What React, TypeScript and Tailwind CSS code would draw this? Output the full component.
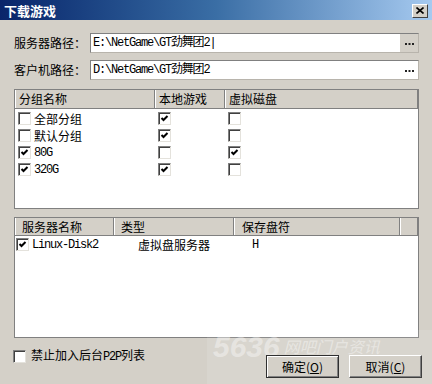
import React from 'react';

const cjk = "font-['Noto_Sans_CJK_SC',sans-serif]";
const mono = "font-['Liberation_Mono','Noto_Sans_CJK_SC',monospace] text-[12px] tracking-[-1.2px]";

function Check({ on }: { on?: boolean }) {
  return (
    <span className="flex h-[13px] w-[13px] shrink-0 items-center justify-center border border-t-[#808080] border-l-[#808080] border-b-[#e4e2dc] border-r-[#e4e2dc] bg-white shadow-[inset_1px_1px_0_#404040]">
      {on && (
        <svg width="9" height="9" viewBox="0 0 9 9">
          <path d="M1.5 4 L3.5 6 L7.5 2" stroke="#000" strokeWidth="2" fill="none" />
        </svg>
      )}
    </span>
  );
}

function HeadCell({ w, children }: { w?: string; children?: React.ReactNode }) {
  return (
    <div className={`flex h-full items-center border-l border-l-white border-r border-r-[#808080] pl-[3px] text-[12px] text-black ${w ?? 'flex-1'}`}>
      {children}
    </div>
  );
}

function PathRow({ label, value, grayBtn }: { label: string; value: string; grayBtn?: boolean }) {
  return (
    <div className="flex items-center">
      <span className="w-[76px] text-[12px] text-black">{label}</span>
      <div className="flex h-[20px] flex-1 items-center border border-t-[#808080] border-l-[#808080] border-b-[#b8b4ac] border-r-[#b8b4ac] bg-white">
        <span className={`flex-1 pl-[2px] text-black ${mono}`}>{value}</span>
        <span className={`flex h-full w-[18px] items-center justify-center ${grayBtn ? 'bg-[#d4d0c8]' : 'bg-white'}`}>
          <svg width="9" height="3" viewBox="0 0 9 3">
            <rect x="0" y="1" width="2" height="2" fill="#222" />
            <rect x="3.5" y="1" width="2" height="2" fill="#222" />
            <rect x="7" y="1" width="2" height="2" fill="#222" />
          </svg>
        </span>
      </div>
    </div>
  );
}

const groups = [
  { name: '全部分组', latin: false, local: true, disk: false, on: false },
  { name: '默认分组', latin: false, local: true, disk: false, on: false },
  { name: '80G', latin: true, local: false, disk: true, on: true },
  { name: '320G', latin: true, local: true, disk: false, on: true },
];

function Button({ children, primary }: { children: React.ReactNode; primary?: boolean }) {
  return (
    <div
      className={`relative z-10 flex h-[23px] w-[73px] items-center justify-center bg-[#d4d0c8] text-[12px] text-black ${
        primary
          ? 'border border-[#303030] shadow-[inset_1px_1px_0_#fff,inset_-1px_-1px_0_#808080]'
          : 'border border-t-white border-l-white border-b-[#404040] border-r-[#404040] shadow-[inset_-1px_-1px_0_#808080]'
      }`}
    >
      {children}
    </div>
  );
}

export default function App() {
  return (
    <div className={`relative h-[384px] w-[432px] overflow-hidden bg-[#d4d0c8] ${cjk}`}>
      {/* Title bar */}
      <div className="flex h-[20px] items-center bg-gradient-to-r from-[#0a246a] via-[#3a6ea5] to-[#a6caf0] pl-[4px] pr-[4px]">
        <span className="text-[13px] font-bold leading-none text-white">下载游戏</span>
        <div className="ml-auto mt-[1px] flex h-[14px] w-[16px] items-center justify-center border border-t-white border-l-white border-b-[#404040] border-r-[#404040] bg-[#d4d0c8]">
          <svg width="8" height="7" viewBox="0 0 8 7">
            <path d="M0.5 0.5 L7.5 6.5 M7.5 0.5 L0.5 6.5" stroke="#000" strokeWidth="1.6" />
          </svg>
        </div>
      </div>

      <div className="flex flex-col pl-[14px] pr-[13px]">
        <div className="mt-[13px]">
          <PathRow label="服务器路径：" value="E:\NetGame\GT劲舞团2|" grayBtn />
        </div>
        <div className="mt-[7px]">
          <PathRow label="客户机路径：" value="D:\NetGame\GT劲舞团2" />
        </div>

        {/* Group table */}
        <div className="mt-[9px] flex h-[120px] flex-col border border-[#808080] bg-white">
          <div className="flex h-[19px] border-b border-b-[#808080] bg-[#d4d0c8]">
            <HeadCell w="w-[140px]">分组名称</HeadCell>
            <HeadCell w="w-[70px]">本地游戏</HeadCell>
            <HeadCell>虚拟磁盘</HeadCell>
          </div>
          <div className="flex flex-col pt-[1px]">
            {groups.map((g) => (
              <div key={g.name} className="flex h-[17px] items-center">
                <div className="flex w-[140px] items-center gap-[3px] pl-[3px]">
                  <Check on={g.on} />
                  <span className={g.latin ? mono : 'text-[12px]'}>{g.name}</span>
                </div>
                <div className="flex w-[70px] items-center pl-[3px]">
                  <Check on={g.local} />
                </div>
                <div className="flex flex-1 items-center pl-[3px]">
                  <Check on={g.disk} />
                </div>
              </div>
            ))}
          </div>
        </div>

        {/* Server table */}
        <div className="mt-[8px] flex h-[121px] flex-col border border-[#808080] bg-white">
          <div className="flex h-[18px] border-b border-b-[#808080] bg-[#d4d0c8]">
            <HeadCell w="w-[99px]">
              <span className="pl-[3px]">服务器名称</span>
            </HeadCell>
            <HeadCell w="w-[120px]">
              <span className="pl-[3px]">类型</span>
            </HeadCell>
            <HeadCell w="w-[166px]">
              <span className="pl-[4px]">保存盘符</span>
            </HeadCell>
            <HeadCell />
          </div>
          <div className="flex h-[17px] items-center">
            <div className="flex w-[99px] items-center gap-[3px] pl-[1px]">
              <Check on />
              <span className={mono}>Linux-Disk2</span>
            </div>
            <div className="flex w-[120px] justify-center text-[12px]">虚拟盘服务器</div>
            <div className={`pl-[18px] ${mono}`}>H</div>
          </div>
        </div>

        {/* Bottom */}
        <div className="flex">
          <div className="mt-[8px] flex items-center gap-[5px] self-start -ml-[1px]">
            <Check />
            <span className="text-[12px]">
              禁止加入后台<span className={mono}>P2P</span>列表
            </span>
          </div>
          <div className="-mr-[3px] ml-auto mt-[17px] flex gap-[10px]">
            <Button primary>确定(<span className="underline">O</span>)</Button>
            <Button>取消(<span className="underline">C</span>)</Button>
          </div>
        </div>
      </div>

      {/* Watermark */}
      <div className="pointer-events-none absolute left-[207px] top-[330px] h-[54px] w-[225px] bg-white/10">
        <div className="flex items-start gap-[4px] pl-[6px] pt-[2px]">
          <span className="font-['Liberation_Sans',sans-serif] text-[30px] font-bold italic leading-none text-white/40">5636</span>
          <span className="pt-[6px] text-[16px] italic leading-none text-white/40">网吧门户资讯</span>
        </div>
      </div>
    </div>
  );
}
